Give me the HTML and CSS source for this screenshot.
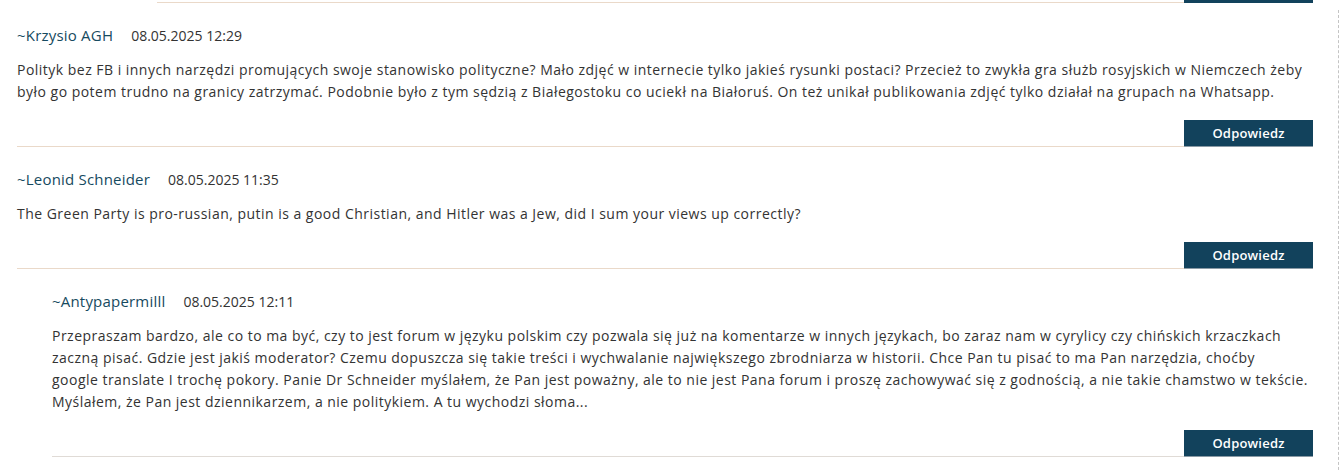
FILE: index.html
```html
<!DOCTYPE html>
<html lang="pl">
<head>
<meta charset="utf-8">
<link rel="stylesheet" href="styles.css">
</head>
<body>
<div class="page">
  <div class="thread">
    <div class="prev-end">
      <div class="prev-line"></div>
      <div class="prev-btn"></div>
    </div>

    <div class="comment">
      <div class="head"><span class="author">~Krzysio AGH</span><span class="date">08.05.2025 12:29</span></div>
      <p class="text">Polityk bez FB i innych narzędzi promujących swoje stanowisko polityczne? Mało zdjęć w internecie tylko jakieś rysunki postaci? Przecież to zwykła gra służb rosyjskich w Niemczech żeby<br>było go potem trudno na granicy zatrzymać. Podobnie było z tym sędzią z Białegostoku co uciekł na Białoruś. On też unikał publikowania zdjęć tylko działał na grupach na Whatsapp.</p>
      <div class="foot"><div class="rule"></div><button class="reply">Odpowiedz</button></div>
    </div>

    <div class="comment">
      <div class="head"><span class="author">~Leonid Schneider</span><span class="date">08.05.2025 11:35</span></div>
      <p class="text">The Green Party is pro-russian, putin is a good Christian, and Hitler was a Jew, did I sum your views up correctly?</p>
      <div class="foot"><div class="rule"></div><button class="reply">Odpowiedz</button></div>
    </div>

    <div class="comment nested">
      <div class="head"><span class="author">~Antypapermilll</span><span class="date">08.05.2025 12:11</span></div>
      <p class="text">Przepraszam bardzo, ale co to ma być, czy to jest forum w języku polskim czy pozwala się już na komentarze w innych językach, bo zaraz nam w cyrylicy czy chińskich krzaczkach<br>zaczną pisać. Gdzie jest jakiś moderator? Czemu dopuszcza się takie treści i wychwalanie największego zbrodniarza w historii. Chce Pan tu pisać to ma Pan narzędzia, choćby<br>google translate I trochę pokory. Panie Dr Schneider myślałem, że Pan jest poważny, ale to nie jest Pana forum i proszę zachowywać się z godnością, a nie takie chamstwo w tekście.<br>Myślałem, że Pan jest dziennikarzem, a nie politykiem. A tu wychodzi słoma...</p>
      <div class="foot"><div class="rule gray"></div><button class="reply">Odpowiedz</button></div>
    </div>
  </div>
  <div class="edge"></div>
</div>
</body>
</html>
```

FILE: styles.css
```css
* { box-sizing: border-box; }
html, body { margin: 0; padding: 0; background: #fff; }
body {
  font-family: "Open Sans", "Noto Sans", sans-serif;
  color: #333;
  height: 470px;
  overflow: hidden;
}
.page {
  display: flex;
  height: 470px;
}
.thread {
  width: 1313px;
  padding-left: 17px;
}
.edge {
  margin-left: 25px;
  width: 2px;
  border-left: 1px dashed #c4c4c4;
  height: 100%;
  margin-top: 10px;
}
.prev-end {
  display: flex;
  align-items: flex-end;
  height: 3px;
  padding-left: 140px;
}
.prev-line {
  flex: 1;
  height: 1px;
  background: #ead9c9;
}
.prev-btn {
  width: 129px;
  height: 3px;
  background: #12425c;
}
.comment {
  padding-top: 22px;
}
.comment.nested {
  margin-left: 35px;
}
.head {
  display: flex;
  align-items: center;
  gap: 18px;
  height: 20px;
}
.author {
  color: #164a60;
  font-size: 15px;
  letter-spacing: 0.2px;
}
.date {
  color: #333;
  font-size: 14px;
}
.text {
  margin: 14px 0 0 0;
  font-size: 14px;
  letter-spacing: 0.48px;
  line-height: 22px;
  color: #333;
  white-space: nowrap;
}
.foot {
  display: flex;
  align-items: flex-end;
  margin-top: 17px;
}
.rule {
  flex: 1;
  height: 1px;
  background: #ead9c9;
}
.rule.gray {
  background: #e0dbd6;
}
.reply {
  width: 129px;
  height: 27px;
  border: 0;
  border-bottom: 1px solid #8a9aa5;
  background: #12425c;
  color: #fff;
  font-family: inherit;
  font-size: 13px;
  letter-spacing: 0.2px;
  font-weight: 600;
  padding: 0;
  cursor: pointer;
}
```
